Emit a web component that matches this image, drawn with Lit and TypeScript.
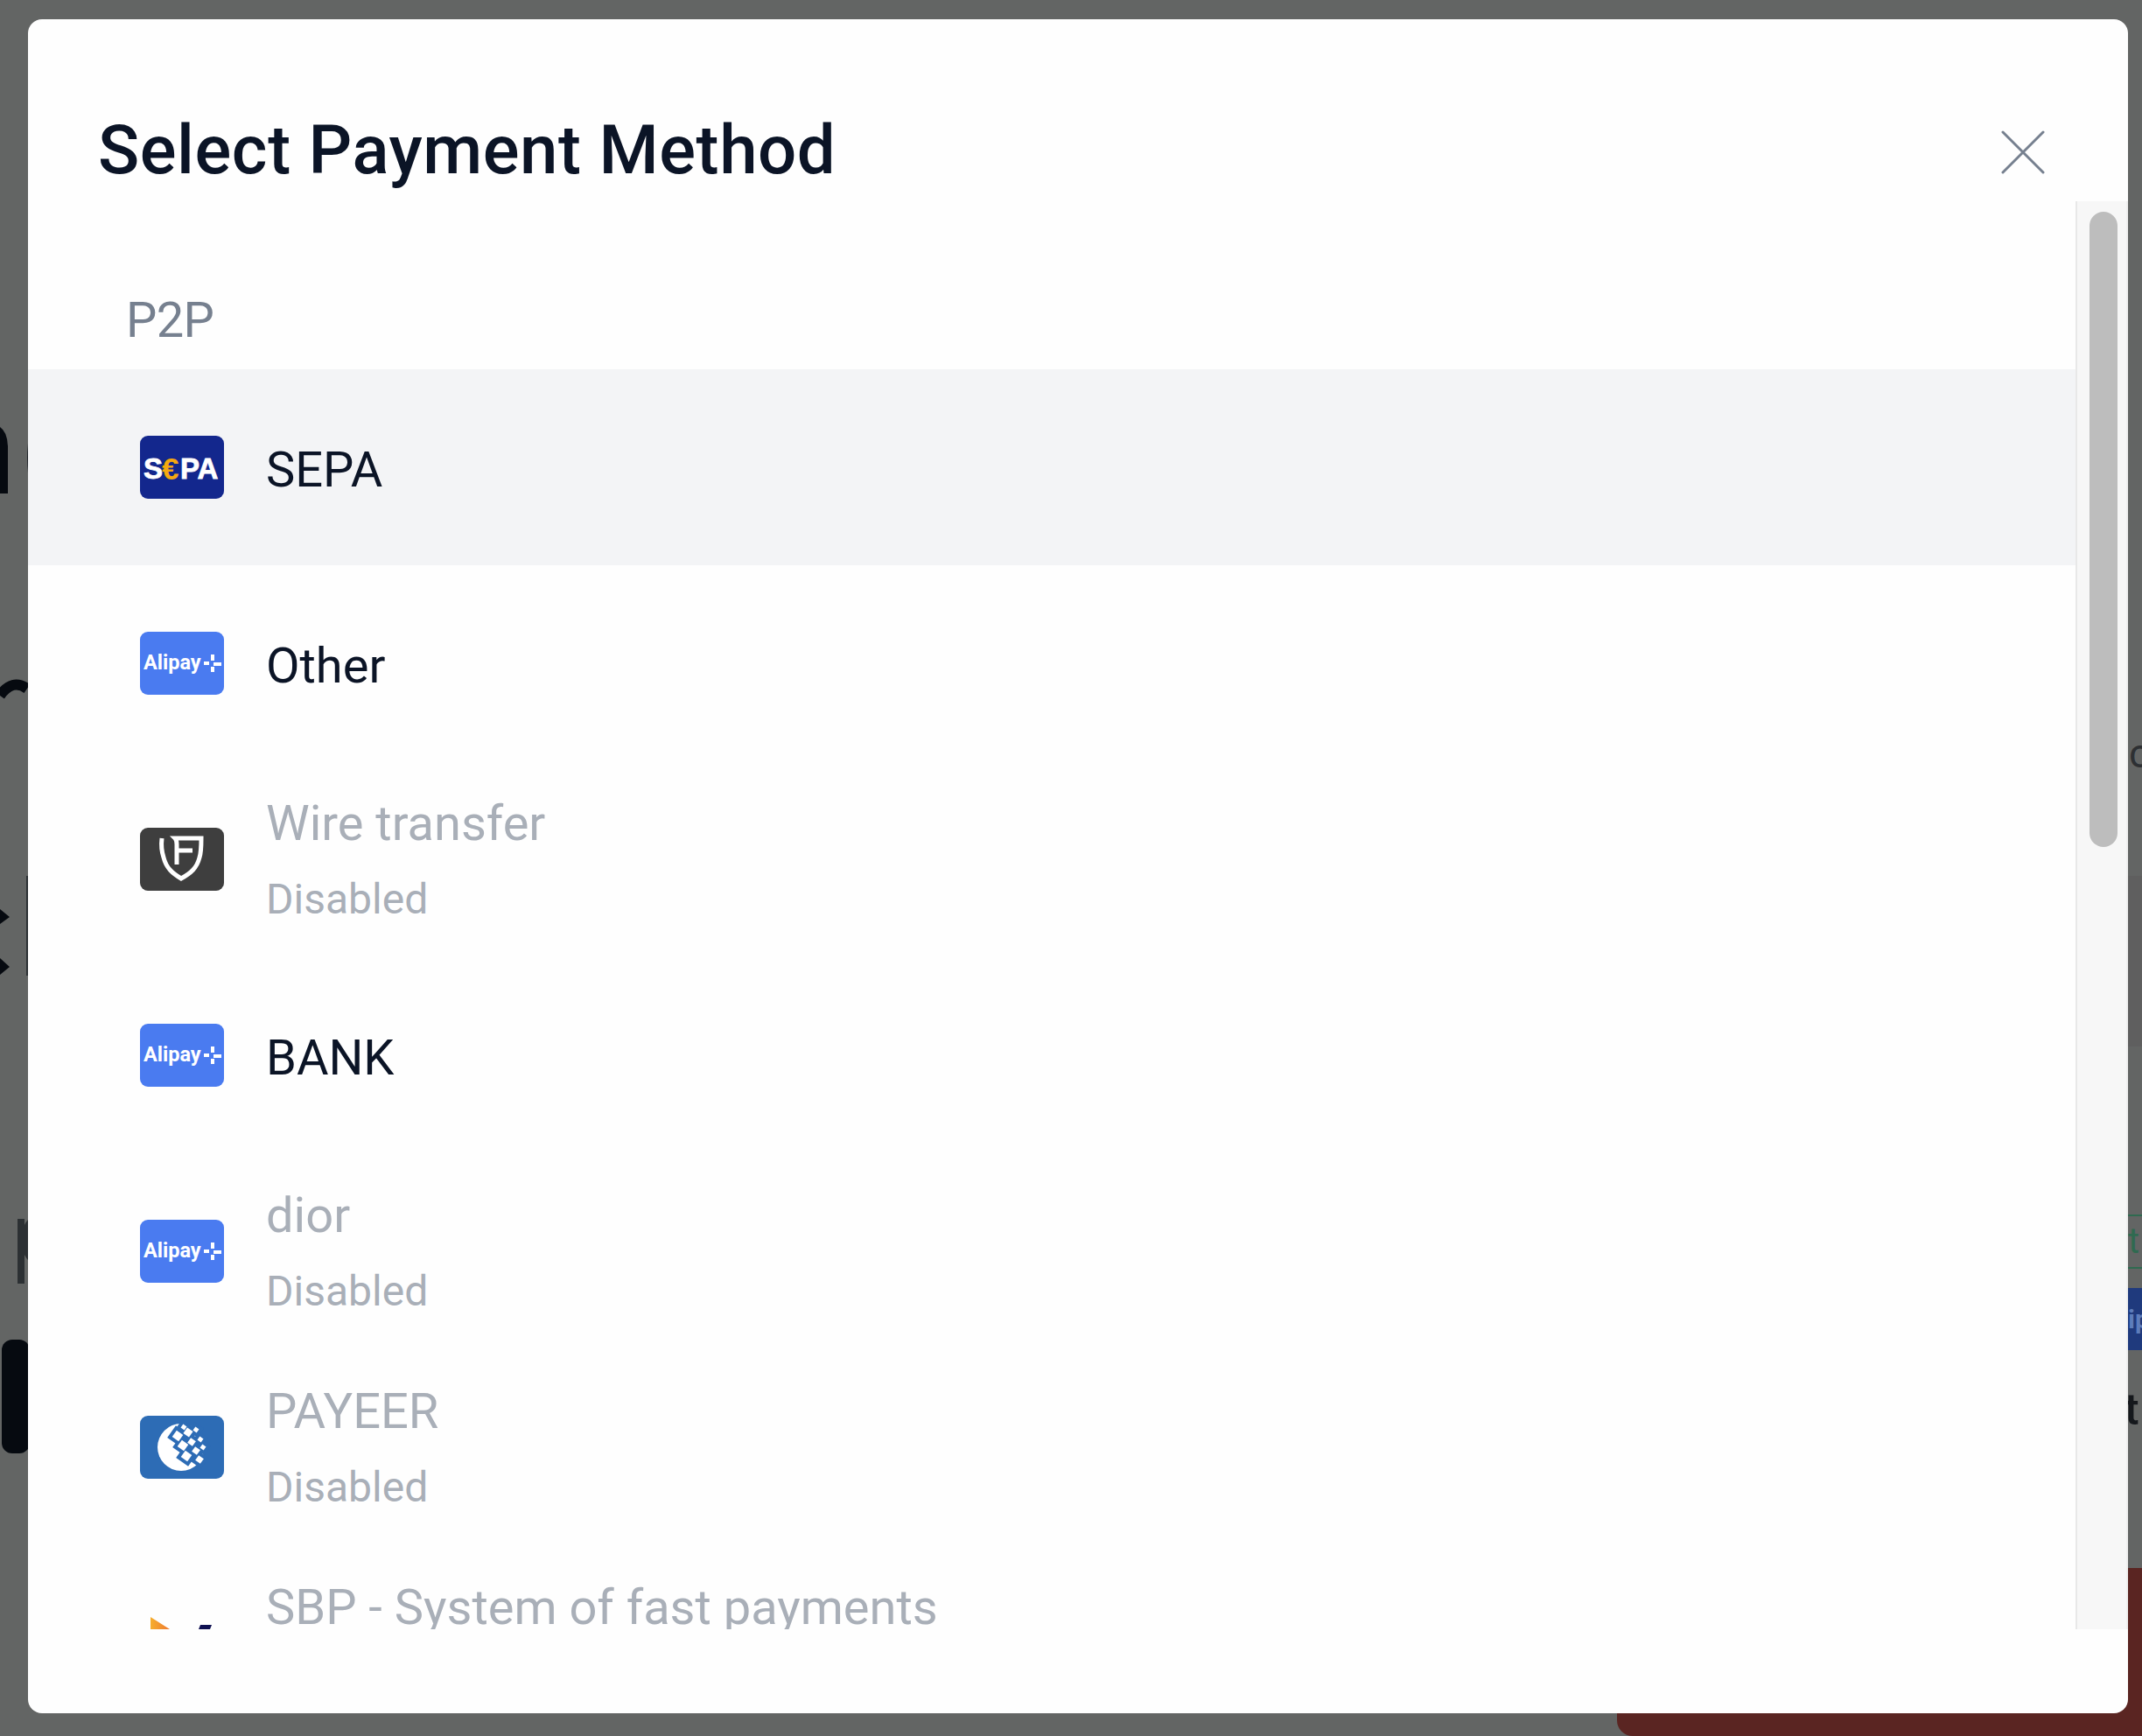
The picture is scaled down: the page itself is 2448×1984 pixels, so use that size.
import { LitElement, html, css, svg } from "lit";
import { customElement } from "lit/decorators.js";

const sepa = svg`<rect width="96" height="72" rx="9" fill="#13278d"/>
<text x="4" y="49" class="sepa" fill="#fff" stroke="#fff" stroke-width="0.8">S</text>
<text x="25" y="50" class="euro" fill="#f6a90f">€</text>
<text x="46" y="49" class="sepa" fill="#fff" stroke="#fff" stroke-width="0.8">PA</text>`;

const alipay = svg`<rect width="96" height="72" rx="9" fill="#4a7bf0"/>
<text x="4" y="43" class="ali" fill="#fff">Alipay</text>
<path d="M73 36h6M83 26v7M83 40v6M84 37h9" stroke="#fff" stroke-width="4" fill="none"/>`;

const shield = svg`<rect width="96" height="72" rx="9" fill="#3e3e3e"/>
<path d="M25 12C24 20 25 28 27 34C30 46 37 52 47 58C58 52 65 46 68 34C70 28 70 20 70 12H40Q42 14 42 19V42M42 26H60" fill="none" stroke="#fff" stroke-width="5"/>`;

const wmPts: [number, number, number][] = [
  [43, 23, 9], [55, 19, 8], [64, 16, 5], [49, 34, 9], [59, 30, 7], [69, 27, 5],
  [53, 46, 9], [64, 40, 7], [72, 36, 5], [68, 50, 7], [50, 13, 5],
];
const webmoney = svg`<rect width="96" height="72" rx="9" fill="#2d6cb5"/>
<circle cx="47" cy="36" r="27" fill="#fff"/>
${wmPts.map(([x, y, s]) => svg`<rect x="${x - s / 2 - 4}" y="${y - s / 2 - 4}" width="${s + 8}" height="${s + 8}" fill="#2d6cb5" transform="rotate(35 ${x} ${y})"/>`)}
${wmPts.map(([x, y, s]) => svg`<rect x="${x - s / 2}" y="${y - s / 2}" width="${s}" height="${s}" fill="#fff" transform="rotate(35 ${x} ${y})"/>`)}`;

const sbp = svg`<defs><linearGradient id="sb" x1="0" x2="1" y1="0" y2="0"><stop offset="0" stop-color="#f6ae2d"/><stop offset="1" stop-color="#ee7a30"/></linearGradient></defs>
<path d="M12 6L34 20L12 34Z" fill="url(#sb)"/>
<path d="M69 15H82L80 20H67Z" fill="#0f1152"/>`;

const ITEMS = [
  { name: "SEPA", icon: sepa, active: true },
  { name: "Other", icon: alipay },
  { name: "Wire transfer", icon: shield, disabled: true },
  { name: "BANK", icon: alipay },
  { name: "dior", icon: alipay, disabled: true },
  { name: "PAYEER", icon: webmoney, disabled: true },
  { name: "SBP - System of fast payments", icon: sbp, disabled: true },
];

@customElement("app-root")
export class AppRoot extends LitElement {
  static styles = css`
    :host { display: block; width: 2448px; height: 1984px; overflow: hidden; }
    .page {
      position: relative; box-sizing: border-box; width: 2448px; height: 1984px;
      padding: 22px 16px 26px 32px; display: flex; overflow: hidden;
      background: #636564; font-family: Roboto, "Liberation Sans", sans-serif;
    }
    .bg { position: absolute; }
    .band { left: 2432px; top: 1001px; width: 16px; height: 195px; background: #5f5f5f; }
    .slivers { left: 0; top: 0; width: 32px; height: 1984px; }
    .red { left: 1848px; top: 1792px; width: 700px; height: 192px; background: #5a2522; border-radius: 0 0 0 18px; }
    .frag { line-height: 1; white-space: nowrap; }
    .c { left: 2433px; top: 838px; font-size: 46px; color: #2d3033; }
    .tag { left: 2432px; top: 1388px; width: 16px; height: 58px; overflow: hidden; border: solid #2f6a50; border-width: 2px 0; color: #2f6a50; font-size: 40px; line-height: 58px; }
    .blue { left: 2432px; top: 1472px; width: 16px; height: 71px; overflow: hidden; background: #1f3a7d; color: #5d7dbb; font-size: 30px; line-height: 71px; font-weight: 700; }
    .tl { left: 2428px; top: 1586px; font-size: 50px; font-weight: 500; color: #15181c; }
    .dialog {
      position: relative; flex: 1; display: flex; flex-direction: column;
      background: #fefefe; border-radius: 16px; overflow: hidden;
    }
    .header {
      flex: none; box-sizing: border-box; height: 208px; display: flex;
      justify-content: space-between; align-items: flex-start;
      padding: 102px 95px 0 80px;
    }
    .title { font-size: 78px; font-weight: 500; line-height: 96px; color: #0b1426; letter-spacing: 0.55px; }
    .close { margin-top: 25px; width: 50px; height: 50px; display: block; }
    .body { flex: none; height: 1632px; display: flex; }
    .list { flex: 1; min-width: 0; overflow: hidden; }
    .group {
      box-sizing: border-box; height: 192px; padding: 108px 0 0 112px;
      font-size: 56px; line-height: 56px; color: #76808f; letter-spacing: -0.6px;
    }
    .row {
      box-sizing: border-box; height: 224px; display: flex; align-items: center;
      gap: 48px; padding-left: 128px;
    }
    .row.active { background: #f3f4f6; }
    .icon { flex: none; width: 96px; height: 72px; display: block; }
    .name { font-size: 56px; line-height: 64px; color: #0b1426; padding-top: 5px; }
    .row.disabled .name { color: #a9afb8; }
    .sub { margin-top: 23px; font-size: 48px; line-height: 64px; color: #a9afb8; }
    .sepa { font: 900 33px "Liberation Sans", sans-serif; }
    .euro { font: 900 35px "Liberation Sans", sans-serif; }
    .ali { font: 700 23.5px Roboto, sans-serif; }
    .track {
      flex: none; box-sizing: border-box; width: 60px; padding: 12px 10px 0 14px;
      background: #f7f7f7; border-left: 2px solid #e8e8e8; border-right: 2px solid #f0f0f0;
    }
    .thumb { height: 726px; border-radius: 16px; background: #bdbdbd; }
  `;

  render() {
    return html`<div class="page">
      <svg class="bg slivers" viewBox="0 0 32 1984">
        <path d="M0 488Q9 494 9 512V564H0Z" fill="#060a10"/>
        <path d="M32 507Q30 523 32 540Z" fill="#1a1e24"/>
        <path d="M0 795Q14 775 31 787" fill="none" stroke="#060a10" stroke-width="12"/>
        <path d="M0 1039L11 1048L0 1056ZM0 1095L11 1105L0 1114Z" fill="#060a10"/>
        <rect x="30" y="1001" width="2" height="114" fill="#2c3033"/>
        <path d="M20 1393H28V1400Q30 1396 32 1394V1440Q30 1438 28 1434V1467H20Z" fill="#2c3033"/>
        <rect x="2" y="1531" width="32" height="130" rx="12" fill="#060a10"/>
      </svg>
      <div class="bg band"></div>
      <div class="bg red"></div>
      <span class="bg frag c">c</span>
      <span class="bg frag tag">t</span>
      <span class="bg frag blue">ip</span>
      <span class="bg frag tl">tl</span>
      <section class="dialog">
        <header class="header">
          <div class="title">Select Payment Method</div>
          <svg class="close" viewBox="0 0 50 50"><path d="M2 2L48 48M48 2L2 48" stroke="#76808f" stroke-width="3" stroke-linecap="round" fill="none"/></svg>
        </header>
        <div class="body">
          <div class="list">
            <div class="group">P2P</div>
            ${ITEMS.map(
              (i) => html`<div class="row ${i.active ? "active" : ""} ${i.disabled ? "disabled" : ""}">
                <svg class="icon" viewBox="0 0 96 72">${i.icon}</svg>
                <div>
                  <div class="name">${i.name}</div>
                  ${i.disabled ? html`<div class="sub">Disabled</div>` : ""}
                </div>
              </div>`
            )}
          </div>
          <div class="track"><div class="thumb"></div></div>
        </div>
      </section>
    </div>`;
  }
}
